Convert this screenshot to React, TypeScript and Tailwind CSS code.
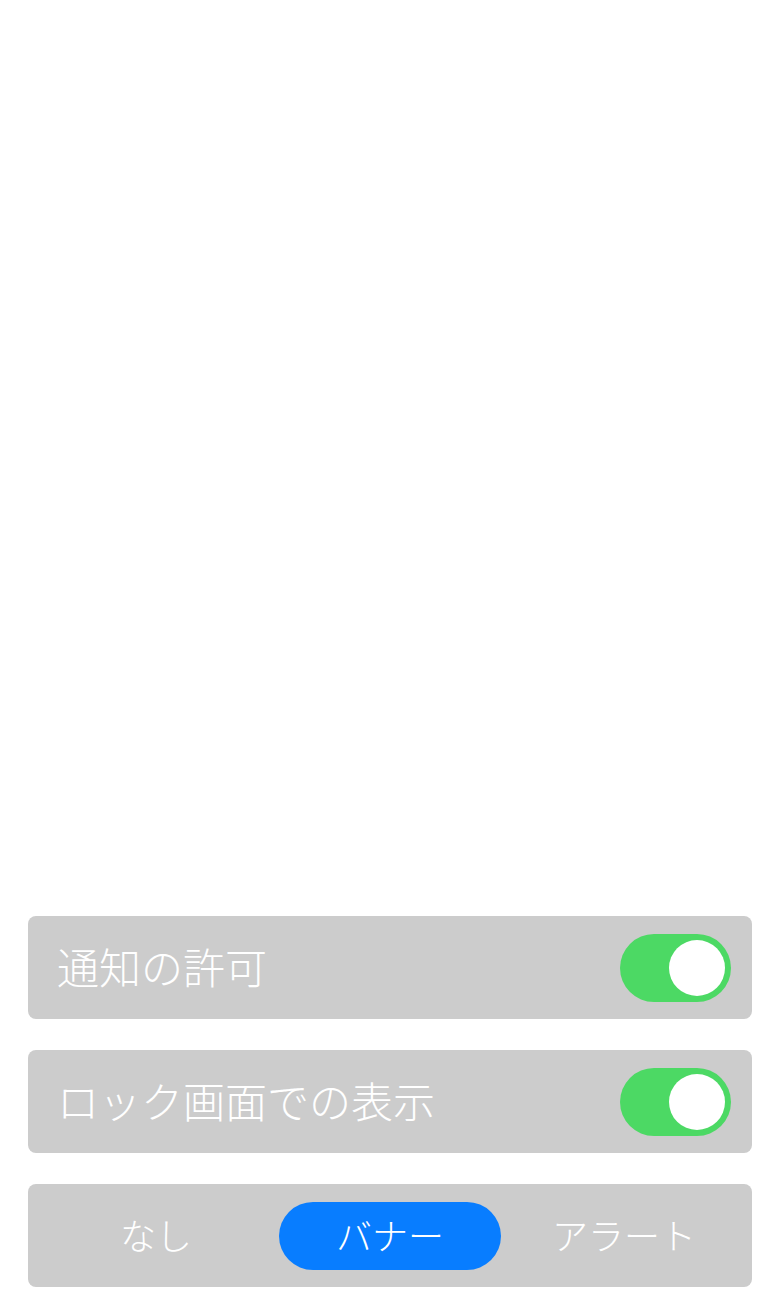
import React from "react";

const font = { fontFamily: '"Noto Sans CJK JP", "Noto Sans", sans-serif' };

function Toggle() {
  return (
    <div className="w-[111px] h-[68px] rounded-full bg-[#4cd964] flex items-center justify-end pr-[6px]">
      <div className="w-[56px] h-[56px] rounded-full bg-white" />
    </div>
  );
}

function Row({ label }: { label: string }) {
  return (
    <div className="h-[103px] rounded-[8px] bg-[#cccccc] flex items-center justify-between pl-[29px] pr-[21px]">
      <span className="text-white text-[42px] font-light leading-none pb-[4px]" style={font}>
        {label}
      </span>
      <Toggle />
    </div>
  );
}

export default function App() {
  const opts = ["なし", "バナー", "アラート"];
  return (
    <div className="w-[780px] h-[1290px] bg-white flex flex-col justify-end px-[28px] pb-[3px] gap-[31px]">
      <Row label="通知の許可" />
      <Row label="ロック画面での表示" />
      <div className="h-[103px] rounded-[8px] bg-[#cccccc] flex items-center px-[11px]">
        {opts.map((o, i) => (
          <div key={o} className="flex-1 px-[6px]">
            <div
              className={
                "h-[68px] rounded-[34px] flex items-center justify-center text-white text-[36px] font-light pb-[4px] " +
                (i === 1 ? "bg-[#087dff]" : "")
              }
              style={font}
            >
              {o}
            </div>
          </div>
        ))}
      </div>
    </div>
  );
}
